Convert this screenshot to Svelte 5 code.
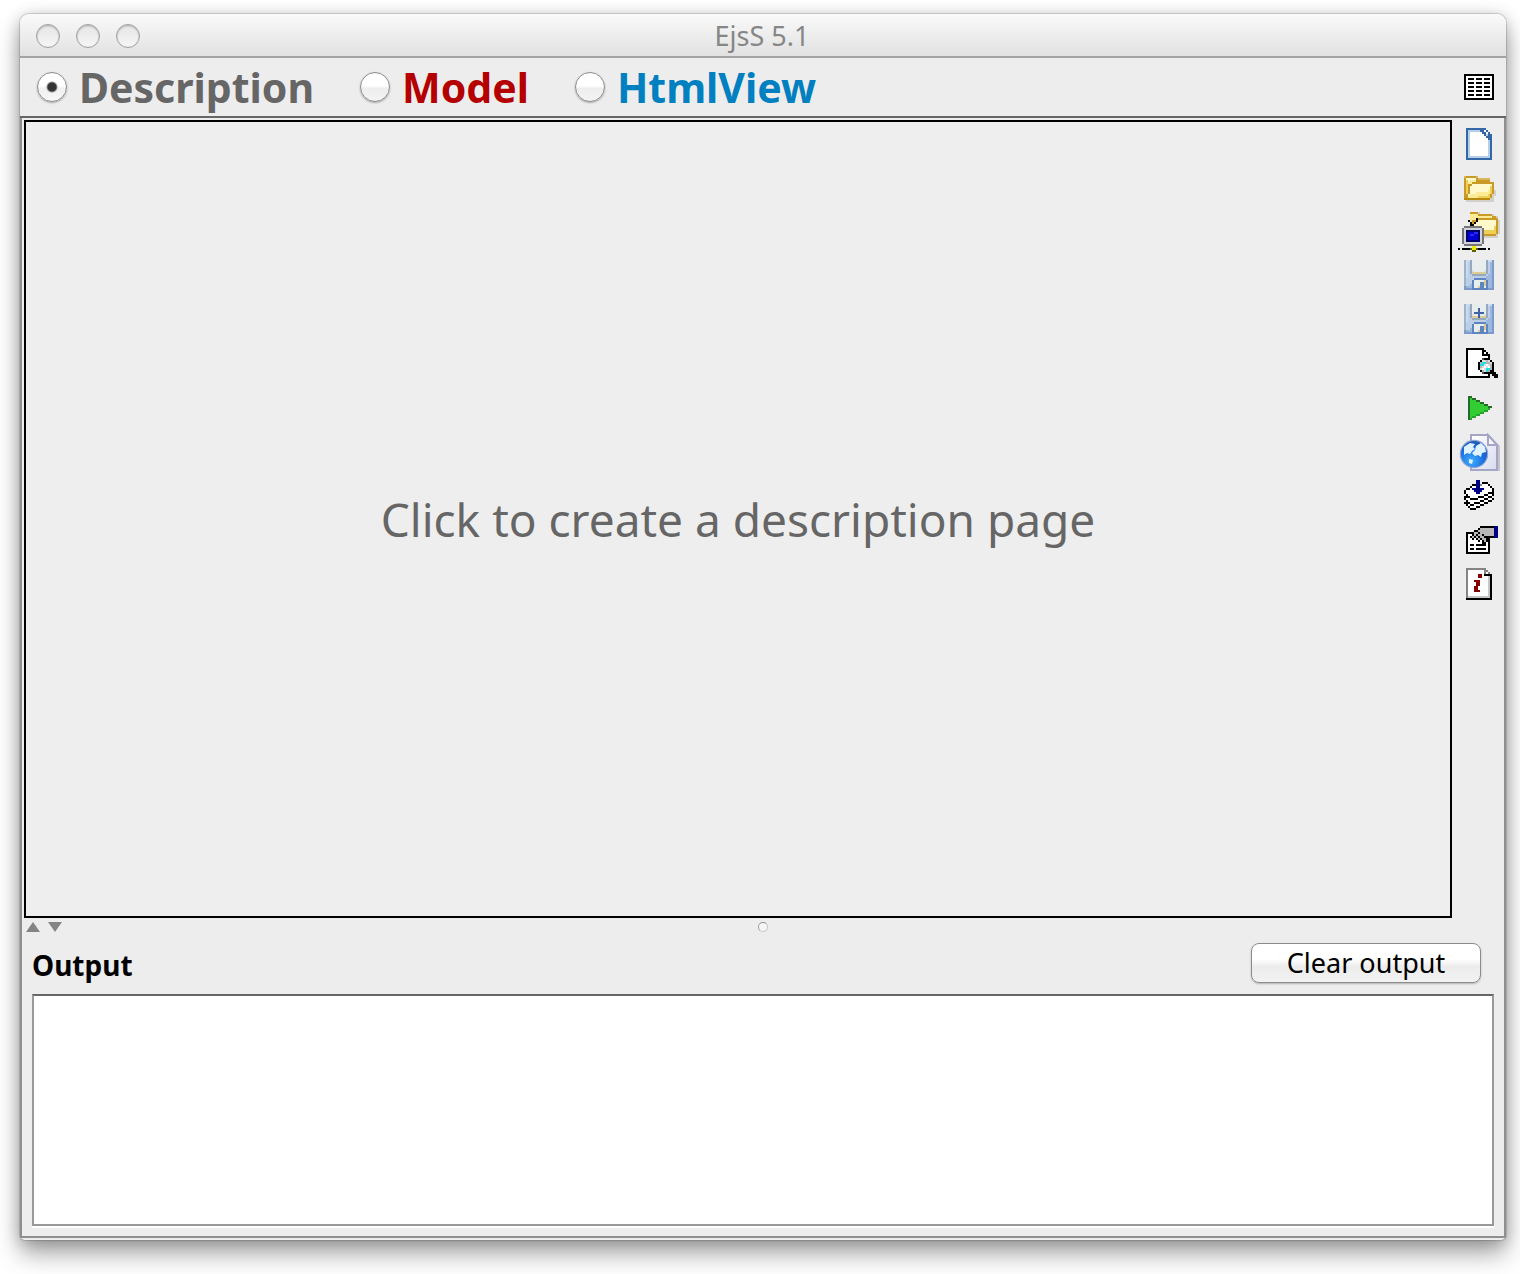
<script>
  const views = [
    { id: 'description', label: 'Description' },
    { id: 'model', label: 'Model' },
    { id: 'html', label: 'HtmlView' }
  ];
  let view = $state('description');
  let output = $state('');

  const tableRows = [
    'kkkkkkkkkkkkkkk', 'kwwwwwwwwwwwwwk',
    'kwkkkwkkkwkkkwk', 'kwwwwwwwwwwwwwk',
    'kwkkkwkkkwkkkwk', 'kwwwwwwwwwwwwwk',
    'kwkkkwkkkwkkkwk', 'kwwwwwwwwwwwwwk',
    'kwkkkwkkkwkkkwk', 'kwwwwwwwwwwwwwk',
    'kwkkkwkkkwkkkwk', 'kwwwwwwwwwwwwwk',
    'kkkkkkkkkkkkkkk'
  ];

  const base = { k: '#000', w: '#fff' };
  const disk = {
    a: '#9fb3c9', b: '#7c9acb', c: '#bccfe9', d: '#9cb8e1', e: '#ccdbed',
    w: '#e8eeee', f: '#d6dfe2', t: '#dccb92', n: '#5f85c0', g: '#94a9bd', p: '#3f63a8'
  };

  // Each tool icon is a 21 x 22 cell bitmap; x and y place its rows in that grid.
  const tools = [
    {
      name: 'New', x: 4, y: 3, colors: { ...base, b: '#3367a5', l: '#b3cfea' },
      rows: [
        'bbbbbbbbbb', 'bllllllbbwb', 'blwwwwwwbbwb', 'blwwwwwwwblbb', 'blwwwwwwwwbbb',
        'blwwwwwwwwwbb', 'blwwwwwwwwwlb', 'blwwwwwwwwwlb', 'blwwwwwwwwwlb', 'blwwwwwwwwwlb',
        'blwwwwwwwwwlb', 'blwwwwwwwwwlb', 'blwwwwwwwwwlb', 'blwwwwwwwwwlb', 'blllllllllllb',
        'bbbbbbbbbbbbb'
      ]
    },
    {
      name: 'Open', x: 3, y: 5,
      colors: { o: '#c99a26', d: '#b98a10', q: '#dcb75a', y: '#fff9cc', m: '#fbeb94', n: '#efcf58', s: '#d3d0ca' },
      rows: [
        'qoooooq', 'oyyyyyoqqqqqq', 'onymmmooooooo', 'onmmooooooooooo', 'onooyyyyyyyyyyo',
        'onoyyyyyyyyyyno', 'onoyyyyyyyyyyno', 'onoyyyyyyyyymnos', 'onoyyymmmmmmmnos',
        'ooymmmmmmmmmnoss', 'oommmmmnnnnnnos', 'dddddddddddddss', '.ssssssssssssss'
      ]
    },
    { name: 'Open from network', kind: 'network' },
    {
      name: 'Save', x: 3, y: 3, colors: disk,
      rows: [
        'aeegwwwwwwwgeeb', 'aecgwwwwwwwgcdb', 'aecgwwwwwwwgcdb', 'aecgwwwwwwwgcdb', 'aecgwwwwwwwgcdb',
        'aecgfwwwwwfgcdb', 'aecgtttttttgcdb', 'aeccgggggggcddb', 'aecccccccccdddb', 'accccnnnnnndddb',
        'acccnwwwwwtnddb', 'acccnwwwnntnddb', 'accdnwwwnntnddb', 'baddnwwtnnwnddb', 'bbbbnnnnnnnnbbb'
      ]
    },
    {
      name: 'Save as', x: 3, y: 3, colors: disk,
      rows: [
        'aeegwwwwwwwgeeb', 'aecgwwwwwwwgcdb', 'aecgwwwpwwwgcdb', 'aecgwwwpwwwgcdb', 'aecgwpppppwgcdb',
        'aecgfwwpwwfgcdb', 'aecgtttptttgcdb', 'aeccgggggggcddb', 'aecccccccccdddb', 'accccnnnnnndddb',
        'acccnwwwwwtnddb', 'acccnwwwnntnddb', 'accdnwwwnntnddb', 'baddnwwtnnwnddb', 'bbbbnnnnnnnnbbb'
      ]
    },
    {
      name: 'Search', x: 4, y: 3, colors: { ...base, g: '#b4b4b4', l: '#dedede', c: '#22dede', h: '#555' },
      rows: [
        'kkkkkkkkk', 'kwwwwwwwkk', 'kwwwwwwwkwk', 'kwwwwwwwkkkk', 'kwwwwwwwwwwk',
        'kwwwwwwwhkkk', 'kwwwwwwkllglk', 'kwwwwwkgccgglk', 'kwwwwwkcclwlgk', 'kwwwwwkglwlwgk',
        'kwwwwwklwlccgk', 'kwwwwwwkglcgkk', 'kwwwwwwwhkkkkkk', 'kwwwwwwwwwwk.kkk', 'kkkkkkkkkkkk..kk'
      ]
    },
    {
      name: 'Run', x: 5, y: 5, colors: { d: '#256b2b', g: '#32cd32', e: '#22a52a' },
      rows: [
        'dd', 'dgdd', 'dgggdd', 'dgggggdd', 'dgggggggdd', 'dgggggggggdd', 'dggggggggge',
        'dgggggggee', 'dgggggee', 'dgggee', 'dgee', 'de'
      ]
    },
    { name: 'View in browser', kind: 'globe' },
    {
      name: 'Package', x: 3, y: 3, colors: { ...base, n: '#000084', g: '#848484' },
      rows: [
        '......nn', '......nn.kkk', '....kknngwwwk', '...kwwnnwwwwwk', '.kkwnnnnnnwwwwk',
        'kwwwwnnnnwwwwwk', 'kwwwwwnnwwwwkkk', '.kwwwwwwwwkkwwk', 'kkkwwwwkkkwwkk', 'kwwkkkkwwwkkwwk',
        '.kwwwwwwkkwwkk', 'kkkwwkkkwwkk', '.kwkkwwwkk', '..kwwwkk', '...kkk'
      ]
    },
    {
      name: 'Options', x: 4, y: 4, colors: { ...base, n: '#000084', g: '#b8b8b8' },
      rows: [
        '.......kkkkkkknn', '......kgggggggnn', '....kkggggggggnn', 'kkkkggkgggggggnn', 'kwwkgkggkgggggnn',
        'kwkgkgkggkkkkknn', 'kwwkwkgkggkk', 'kwwwwwkwkgkk', 'kwwwwwwwkkwk', 'kwkkwkkkkkwk',
        'kwwwwwwwwwwk', 'kwkkwkkkkkwk', 'kwwwwwwwwwwk', 'kkkkkkkkkkkk'
      ]
    },
    {
      name: 'Information', x: 4, y: 3, colors: { ...base, g: '#848484', l: '#c6c6c6', r: '#840000' },
      rows: [
        'gggggggggg', 'gwwwwwwwwgg', 'gwwwwwwwwgwg', 'gwwwwwrrwkkkk', 'gwwwwwrrwwwlk',
        'gwwwwwwwwwwlk', 'gwwwrrrwwwwlk', 'gwwwwrrwwwwlk', 'gwwwwrrwwwwlk', 'gwwwrrwwwwwlk',
        'gwwwrrwwwwwlk', 'gwwwrrrwwwwlk', 'gwwwwwwwwwwlk', 'gwwwwwwwwwwlk', 'glllllllllllk',
        'kkkkkkkkkkkkk'
      ]
    }
  ];
</script>

{#snippet bitmap(rows, colors, ox, oy)}
  {#each rows as row, r}
    {#each row.split('') as cell, c}
      {#if colors[cell]}
        <rect x={ox + c} y={oy + r} width="1" height="1" fill={colors[cell]} />
      {/if}
    {/each}
  {/each}
{/snippet}

<div class="desktop">
  <div class="window">
    <header class="titlebar">
      <div class="lights">
        <button class="light" aria-label="Close"></button>
        <button class="light" aria-label="Minimize"></button>
        <button class="light" aria-label="Zoom"></button>
      </div>
      <h1>EjsS 5.1</h1>
    </header>

    <div class="views">
      {#each views as v}
        <label class="view {v.id}">
          <input type="radio" name="view" value={v.id} bind:group={view} />
          <span>{v.label}</span>
        </label>
      {/each}
      <button class="plain table-button" aria-label="Show table">
        <svg width="30" height="26" viewBox="0 0 15 13" shape-rendering="crispEdges">
          {@render bitmap(tableRows, base, 0, 0)}
        </svg>
      </button>
    </div>

    <div class="body">
      <div class="work">
        <button class="canvas">Click to create a description page</button>
        <nav class="tools" aria-label="Tools">
          {#each tools as tool}
            <button class="plain" aria-label={tool.name}>
              <svg width="42" height="44" viewBox="0 0 21 22" shape-rendering={tool.kind === 'globe' ? 'auto' : 'crispEdges'}>
                {#if tool.kind === 'network'}
                  <path d="M6 1h5v1h7v1h2v2h1v7h-1v2H8V5H6z" fill="#d3d0ca" />
                  <path d="M6 1h4v1h7v1h2v1h1v8h-1v1H6z" fill="#c99a26" />
                  <path d="M6 2h4v1h7v1h-8v1H7v5H6z" fill="#fbeb94" />
                  <path d="M9 5h10v3h-1v3H8V7h1z" fill="#fff9cc" />
                  <path d="M13 10h5V8h1v4h-6z" fill="#efcf58" />
                  <path d="M5 5h1v1h1v1h1V6h1V5h1v1h-1v1H8v1H6V6H5zM9 4h1v1H9z" fill="#000" />
                  <path d="M2 9h1V8h9v1h1v8h-1v1H3v-1H2z" fill="#777" />
                  <path d="M3 9h9v8H3z" fill="#d2d2da" />
                  <path d="M4 10h7v6H4z" fill="#00006a" />
                  <path d="M5 11h5v4H5z" fill="#0000d4" />
                  <path d="M6 12h2v-1h2v1H8v1H6z" fill="#2a2af4" />
                  <path d="M0 19h1v1H0zM2 19h12v1H2zM15 19h1v1h-1z" fill="#000" />
                  <path d="M6 19h4v1H6zM7 18h2v3H7z" fill="#606000" />
                  <path d="M7 18h2v2H7z" fill="#f0ec00" />
                {:else if tool.kind === 'globe'}
                  <defs>
                    <radialGradient id="ocean" cx="0.4" cy="0.75" r="0.8">
                      <stop offset="0" stop-color="#3fb0ff" />
                      <stop offset="0.6" stop-color="#1a6ade" />
                      <stop offset="1" stop-color="#2452ac" />
                    </radialGradient>
                    <linearGradient id="sheet" x1="0" y1="0" x2="1" y2="1">
                      <stop offset="0" stop-color="#fff" />
                      <stop offset="1" stop-color="#d9dbee" />
                    </linearGradient>
                  </defs>
                  <path d="M7 4h9l5 4v12.500H8z" fill="#c4c3cc" />
                  <path d="M6.500 2.500h8.500l4.500 5v12.500H6.500z" fill="url(#sheet)" stroke="#a5a6c6" />
                  <path d="M15 2.500v5h4.500z" fill="#f6f6fc" stroke="#a5a6c6" />
                  <circle cx="8" cy="12" r="6.800" fill="url(#ocean)" stroke="#8fa6d2" stroke-width="0.600" />
                  <path d="M3 8.500l3-2 2.500.5-1 1.500 1 1-1.500 1-1 1.500-1.500-.5-1.500 1zM9 8l2.500-1.500 2 2 .5 2.500-2 .5-.5 2-1.500-1-1.500.5-1.500-1.500 1.500-1.500zM5.500 14.500l2 .5-.5 2-1.500-.5z" fill="#dff2ff" />
                {:else}
                  {@render bitmap(tool.rows, tool.colors, tool.x, tool.y)}
                {/if}
              </svg>
            </button>
          {/each}
        </nav>
      </div>

      <div class="splitter">
        <button class="plain" aria-label="Collapse upper pane">
          <svg width="14" height="10" viewBox="0 0 14 10"><path d="M7 0l7 10H0z" fill="#848484" /></svg>
        </button>
        <button class="plain" aria-label="Collapse lower pane">
          <svg width="14" height="10" viewBox="0 0 14 10"><path d="M0 0h14L7 10z" fill="#848484" /></svg>
        </button>
        <span class="grip"></span>
      </div>

      <section class="output">
        <div class="output-head">
          <label for="output">Output</label>
          <button class="clear" onclick={() => (output = '')}>Clear output</button>
        </div>
        <textarea id="output" bind:value={output}></textarea>
      </section>
    </div>
  </div>
</div>

<style>
  :global(body) {
    background: #fff;
  }
  .desktop,
  .desktop * {
    box-sizing: border-box;
  }
  .desktop {
    min-height: 100vh;
    padding: 14px 14px 34px 20px;
    display: flex;
    overflow: hidden;
    font-family: 'Noto Sans', 'Open Sans', sans-serif;
  }
  button {
    font: inherit;
  }
  .plain {
    display: block;
    padding: 0;
    border: 0;
    background: none;
  }
  svg {
    display: block;
  }
  .window {
    flex: 1;
    display: flex;
    flex-direction: column;
    border-radius: 9px 9px 5px 5px;
    background: #ededed;
    box-shadow:
      0 0 1px 1px rgba(0, 0, 0, 0.15),
      0 14px 24px rgba(0, 0, 0, 0.34),
      0 2px 16px rgba(0, 0, 0, 0.2);
  }
  .titlebar {
    display: grid;
    grid-template-columns: 1fr auto 1fr;
    align-items: center;
    height: 44px;
    padding: 2px 18px 0 16px;
    border-bottom: 2px solid #a3a3a3;
    border-radius: 9px 9px 0 0;
    background: linear-gradient(#fafafa, #e1e1e1);
  }
  .lights {
    display: flex;
    gap: 16px;
  }
  .light {
    width: 24px;
    height: 24px;
    padding: 0;
    border: 1px solid #a0a0a0;
    border-radius: 50%;
    background: linear-gradient(#e6e6e6, #f5f5f5);
    box-shadow: inset 0 1px 2px rgba(0, 0, 0, 0.25);
  }
  h1 {
    margin: 0;
    font-size: 27px;
    line-height: 40px;
    font-weight: 400;
    color: #868686;
  }
  .views {
    display: flex;
    align-items: center;
    gap: 46px;
    height: 60px;
    padding: 0 12px 0 17px;
    border-bottom: 2px solid #666;
  }
  .view {
    display: flex;
    align-items: center;
    gap: 12px;
    font-size: 41px;
    line-height: 56px;
    font-weight: 700;
  }
  .description {
    color: #666;
  }
  .model {
    color: #b40000;
  }
  .html {
    color: #0080c0;
  }
  input {
    appearance: none;
    flex: none;
    width: 30px;
    height: 30px;
    margin: 0;
    border: 1px solid #8c8c8c;
    border-radius: 50%;
    background: linear-gradient(#fff 45%, #eee 55%, #f3f3f3);
    box-shadow: 0 1px 2px rgba(0, 0, 0, 0.3);
  }
  input:checked {
    background:
      radial-gradient(circle, #333 4px, transparent 6px),
      linear-gradient(#fff 45%, #f0f0f0 55%, #f8f8f8);
  }
  .table-button {
    margin-left: auto;
  }
  .body {
    flex: 1;
    display: flex;
    flex-direction: column;
    margin-bottom: 2px;
    padding-top: 2px;
    border: solid #8f8f8f;
    border-width: 0 2px 2px;
  }
  .work {
    flex: 1;
    display: flex;
    padding-left: 2px;
  }
  .canvas {
    flex: 1;
    padding: 0;
    border: 2px solid #000;
    border-radius: 0;
    background: #eee;
    font-size: 46px;
    line-height: 60px;
    color: #666;
  }
  .tools {
    flex: none;
    width: 52px;
    padding: 2px 4px 0 6px;
  }
  .splitter {
    display: grid;
    grid-template-columns: 14px 14px 1fr;
    align-items: center;
    gap: 8px;
    height: 18px;
    padding: 0 48px 0 4px;
  }
  .grip {
    justify-self: center;
    width: 10px;
    height: 10px;
    border: 1px solid #c4c4c4;
    border-top-color: #8f8f8f;
    border-left-color: #9c9c9c;
    border-radius: 50%;
    background: #f6f6f6;
  }
  .output {
    padding: 0 10px 10px;
  }
  .output-head {
    display: flex;
    align-items: center;
    justify-content: space-between;
    height: 58px;
    padding-right: 13px;
  }
  .output-head label {
    font-size: 28px;
    line-height: 40px;
    font-weight: 700;
    color: #000;
  }
  .clear {
    width: 230px;
    height: 40px;
    margin-bottom: 4px;
    padding: 0;
    border: 1px solid #8c8c8c;
    border-radius: 8px;
    background: linear-gradient(#fff 40%, #ececec 60%, #f2f2f2);
    box-shadow: 0 1px 2px rgba(0, 0, 0, 0.25);
    font-size: 27px;
    line-height: 36px;
    color: #000;
  }
  textarea {
    display: block;
    width: 100%;
    height: 232px;
    padding: 4px;
    border: 2px solid #999;
    border-top-color: #666;
    border-radius: 0;
    background: #fff;
    box-shadow: 0 2px 0 #fff;
    font: inherit;
    font-size: 24px;
    line-height: 32px;
    resize: none;
    outline: 0;
  }
</style>
